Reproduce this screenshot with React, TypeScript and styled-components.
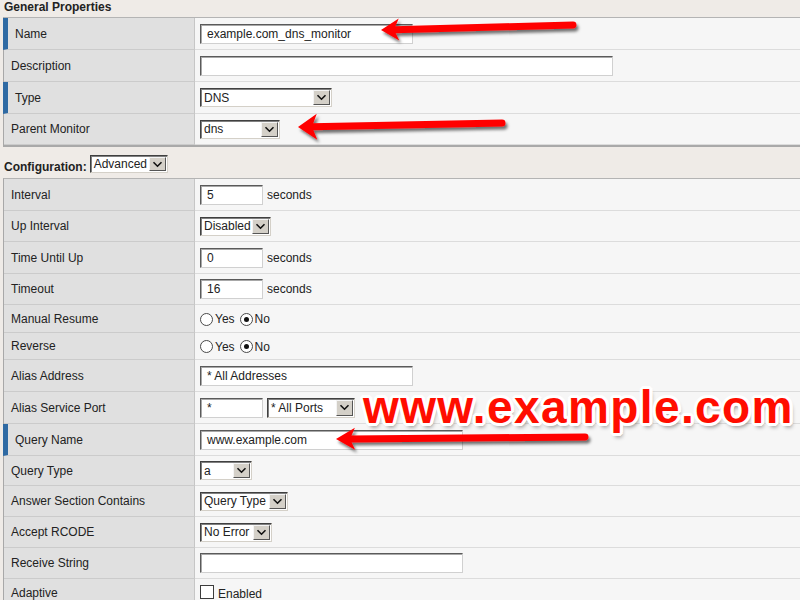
import React from "react";
import styled, { createGlobalStyle } from "styled-components";

const GlobalStyle = createGlobalStyle`
    html, body {
        margin: 0;
        padding: 0;
        background: #efebe7;
        font-family: "Liberation Sans", Arial, sans-serif;
        font-size: 12px;
        color: #222;
        overflow: hidden;
    }
`;

const Page = styled.div`
    position: relative;
    width: 800px;
    height: 600px;
    overflow: hidden;
    padding-left: 3px;
    box-sizing: border-box;
`;

const SectionTitle = styled.div`
    font-weight: bold;
    font-size: 12px;
    height: 17px;
    line-height: 14px;
    padding-left: 1px;
`;

const Table = styled.div`
    border-left: 1px solid #a8a8a8;
    border-top: 1px solid #b4b4b4;
    border-bottom: 2px solid #a9a9a9;
`;

const Row = styled.div<{ $h: number }>`
    display: grid;
    grid-template-columns: 191px 1fr;
    height: ${(p) => p.$h}px;
`;

const Label = styled.div<{ $marked?: boolean }>`
    display: flex;
    align-items: center;
    background: #e0e0e0;
    border-right: 1px solid #c6c6c6;
    border-bottom: 1px solid #cbcbcb;
    padding-left: 7px;
    border-left: ${(p) => (p.$marked ? "5px solid #2f6aa3" : "none")};
    margin-left: ${(p) => (p.$marked ? "-1px" : "0")};
    font-size: 12px;
`;

const Value = styled.div`
    display: flex;
    align-items: center;
    gap: 4px;
    background: #f6f6f6;
    border-bottom: 1px solid #dcdcdc;
    padding-left: 5px;
`;

const Input = styled.div<{ $w: number }>`
    box-sizing: border-box;
    width: ${(p) => p.$w}px;
    height: 20px;
    background: #fff;
    border: 1px solid;
    border-color: #5a5a5a #d0d0d0 #d0d0d0 #5a5a5a;
    box-shadow: inset 1px 1px 0 #a8a8a8;
    padding-left: 6px;
    font-size: 12px;
    line-height: 18px;
    white-space: nowrap;
    overflow: hidden;
`;

const Unit = styled.span<{ $drop?: number }>`
    font-size: 12px;
    padding-top: ${(p) => p.$drop ?? 0}px;
`;

const SelectBox = styled.div<{ $w: number; $h?: number }>`
    box-sizing: border-box;
    display: inline-flex;
    align-items: stretch;
    width: ${(p) => p.$w}px;
    height: ${(p) => p.$h ?? 19}px;
    background: #fff;
    border: 1px solid;
    border-color: #404040 #d4d0c8 #d4d0c8 #404040;
    box-shadow: inset 1px 1px 0 #808080;
    font-size: 12px;
`;

const SelectText = styled.span`
    flex: 1;
    display: flex;
    align-items: center;
    padding-left: 3px;
    white-space: nowrap;
    overflow: hidden;
`;

const SelectButton = styled.span`
    box-sizing: border-box;
    width: 17px;
    margin: 1px 1px 1px 0;
    display: flex;
    align-items: center;
    justify-content: center;
    background: #d4d0c8;
    border: 1px solid;
    border-color: #f4f4f4 #555 #555 #f4f4f4;
`;

const Select = ({ w, h, text }: { w: number; h?: number; text: string }) => (
    <SelectBox $w={w} $h={h}>
        <SelectText>{text}</SelectText>
        <SelectButton>
            <svg width="11" height="7" viewBox="0 0 11 7">
                <path d="M1.5 1.2 L5.5 5.2 L9.5 1.2" fill="none" stroke="#111" strokeWidth="1.6" />
            </svg>
        </SelectButton>
    </SelectBox>
);

const RadioCircle = styled.span<{ $checked?: boolean }>`
    box-sizing: border-box;
    width: 13px;
    height: 13px;
    border-radius: 50%;
    border: 1px solid #4a4a4a;
    background: #fff;
    display: inline-flex;
    align-items: center;
    justify-content: center;
    &::after {
        content: "";
        width: 5px;
        height: 5px;
        border-radius: 50%;
        background: ${(p) => (p.$checked ? "#111" : "transparent")};
    }
`;

const Option = styled.span`
    display: inline-flex;
    align-items: center;
    gap: 2px;
    margin-right: 1px;
    font-size: 12px;
    padding-top: 1px;
`;

const Radios = () => (
    <>
        <Option>
            <RadioCircle />
            Yes
        </Option>
        <Option>
            <RadioCircle $checked />
            No
        </Option>
    </>
);

const CheckBox = styled.span`
    box-sizing: border-box;
    width: 14px;
    height: 14px;
    border: 1px solid #3c3c3c;
    background: #fff;
    margin-bottom: 3px;
`;

const ConfigBar = styled.div`
    display: flex;
    align-items: flex-end;
    height: 31px;
    padding-left: 1px;
    gap: 3px;
    padding-bottom: 5px;
    box-sizing: border-box;
`;

const ConfigLabel = styled.span`
    font-weight: bold;
    font-size: 12px;
    line-height: 12px;
`;

const Overlay = styled.svg`
    position: absolute;
    left: 0;
    top: 0;
    pointer-events: none;
`;

const BigCaption = styled.div`
    position: absolute;
    left: 363px;
    top: 384px;
    font-family: "Liberation Sans", Arial, sans-serif;
    font-weight: bold;
    font-size: 46px;
    line-height: 46px;
    letter-spacing: 1.4px;
    color: #ff0d00;
    white-space: nowrap;
    text-shadow:
        2px 0 0 #fff, -2px 0 0 #fff, 0 2px 0 #fff, 0 -2px 0 #fff,
        2px 2px 0 #fff, -2px -2px 0 #fff, 2px -2px 0 #fff, -2px 2px 0 #fff,
        3px 1px 0 #fff, -3px 1px 0 #fff, 1px 3px 0 #fff, 1px -3px 0 #fff,
        -1px 3px 0 #fff, 3px -1px 0 #fff, -3px -1px 0 #fff, -1px -3px 0 #fff,
        2px 4px 4px rgba(0, 0, 0, 0.45);
`;

type Arrow = { tip: [number, number]; tail: [number, number]; head: number; spread: number };

const arrows: Arrow[] = [
    { tip: [381, 30], tail: [573, 25], head: 18, spread: 11 },
    { tip: [298, 127], tail: [502, 123], head: 19, spread: 13 },
    { tip: [336, 439], tail: [585, 437], head: 19, spread: 11 },
];

const ArrowShape = ({ a }: { a: Arrow }) => {
    const [tx, ty] = a.tip;
    const [ex, ey] = a.tail;
    const len = Math.hypot(ex - tx, ey - ty);
    const ux = (ex - tx) / len;
    const uy = (ey - ty) / len;
    const bx = tx + ux * a.head;
    const by = ty + uy * a.head;
    const nx = tx + ux * (a.head - 5);
    const ny = ty + uy * (a.head - 5);
    const p1 = `${bx - uy * a.spread},${by + ux * a.spread}`;
    const p2 = `${bx + uy * a.spread},${by - ux * a.spread}`;
    return (
        <g filter="url(#shadow)">
            <line x1={nx} y1={ny} x2={ex} y2={ey} stroke="#ff0000" strokeWidth="7" strokeLinecap="round" />
            <polygon points={`${tx},${ty} ${p1} ${nx},${ny} ${p2}`} fill="#ff0000" />
        </g>
    );
};

export default function App() {
    return (
        <>
            <GlobalStyle />
            <Page>
                <SectionTitle>General Properties</SectionTitle>
                <Table>
                    <Row $h={32}>
                        <Label $marked>Name</Label>
                        <Value><Input $w={213}>example.com_dns_monitor</Input></Value>
                    </Row>
                    <Row $h={32}>
                        <Label>Description</Label>
                        <Value><Input $w={413} /></Value>
                    </Row>
                    <Row $h={32}>
                        <Label $marked>Type</Label>
                        <Value><Select w={132} text="DNS" /></Value>
                    </Row>
                    <Row $h={31}>
                        <Label>Parent Monitor</Label>
                        <Value><Select w={80} text="dns" /></Value>
                    </Row>
                </Table>

                <ConfigBar>
                    <ConfigLabel>Configuration:</ConfigLabel>
                    <Select w={78} h={18} text="Advanced" />
                </ConfigBar>

                <Table>
                    <Row $h={32}>
                        <Label>Interval</Label>
                        <Value><Input $w={63}>5</Input><Unit>seconds</Unit></Value>
                    </Row>
                    <Row $h={31}>
                        <Label>Up Interval</Label>
                        <Value><Select w={71} text="Disabled" /></Value>
                    </Row>
                    <Row $h={32}>
                        <Label>Time Until Up</Label>
                        <Value><Input $w={63}>0</Input><Unit>seconds</Unit></Value>
                    </Row>
                    <Row $h={31}>
                        <Label>Timeout</Label>
                        <Value><Input $w={63}>16</Input><Unit>seconds</Unit></Value>
                    </Row>
                    <Row $h={28}>
                        <Label>Manual Resume</Label>
                        <Value><Radios /></Value>
                    </Row>
                    <Row $h={27}>
                        <Label>Reverse</Label>
                        <Value><Radios /></Value>
                    </Row>
                    <Row $h={32}>
                        <Label>Alias Address</Label>
                        <Value><Input $w={213}>* All Addresses</Input></Value>
                    </Row>
                    <Row $h={32}>
                        <Label>Alias Service Port</Label>
                        <Value><Input $w={63}>*</Input><Select w={88} h={20} text="* All Ports" /></Value>
                    </Row>
                    <Row $h={32}>
                        <Label $marked>Query Name</Label>
                        <Value><Input $w={263}>www.example.com</Input></Value>
                    </Row>
                    <Row $h={30}>
                        <Label>Query Type</Label>
                        <Value><Select w={52} text="a" /></Value>
                    </Row>
                    <Row $h={31}>
                        <Label>Answer Section Contains</Label>
                        <Value><Select w={88} text="Query Type" /></Value>
                    </Row>
                    <Row $h={31}>
                        <Label>Accept RCODE</Label>
                        <Value><Select w={72} text="No Error" /></Value>
                    </Row>
                    <Row $h={31}>
                        <Label>Receive String</Label>
                        <Value><Input $w={263} /></Value>
                    </Row>
                    <Row $h={29}>
                        <Label>Adaptive</Label>
                        <Value><CheckBox /><Unit $drop={1}>Enabled</Unit></Value>
                    </Row>
                </Table>

                <Overlay width="800" height="600" viewBox="0 0 800 600">
                    <defs>
                        <filter id="shadow" x="-10%" y="-50%" width="120%" height="200%">
                            <feDropShadow dx="2" dy="3" stdDeviation="1.6" floodColor="#000" floodOpacity="0.55" />
                        </filter>
                    </defs>
                    {arrows.map((a, i) => (
                        <ArrowShape key={i} a={a} />
                    ))}
                </Overlay>
                <BigCaption>www.example.com</BigCaption>
            </Page>
        </>
    );
}
